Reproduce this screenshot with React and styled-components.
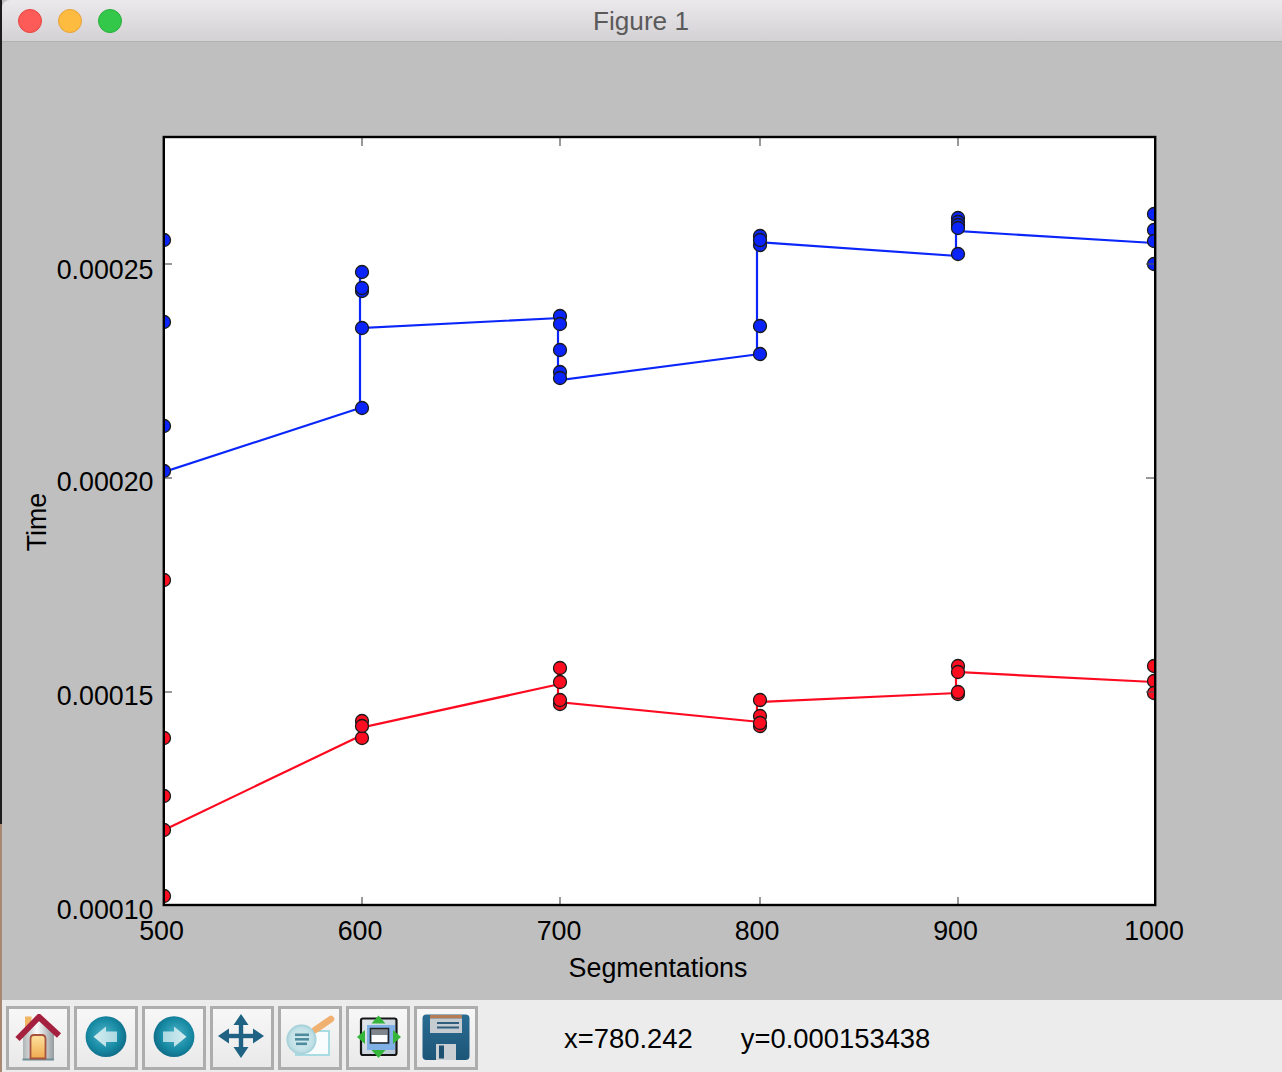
import styled, { createGlobalStyle } from "styled-components";

const GlobalStyle = createGlobalStyle`
  html, body {
    margin: 0;
    padding: 0;
    background: #bfbfbf;
  }
  body {
    font-family: "Liberation Sans", Arial, sans-serif;
  }
`;

const Desktop = styled.div`
  width: 1282px;
  height: 1072px;
  display: flex;
  overflow: hidden;
`;

const DesktopEdge = styled.div`
  width: 2px;
  flex: none;
  background: linear-gradient(#1c1c1c 0, #1c1c1c 824px, #a98770 824px, #a98770 100%);
`;

const Window = styled.div`
  flex: 1;
  min-width: 0;
  display: flex;
  flex-direction: column;
`;

const TitleBar = styled.div`
  height: 41px;
  flex: none;
  display: flex;
  align-items: center;
  position: relative;
  padding-left: 16px;
  gap: 16px;
  background: linear-gradient(#ece9ec, #d3d1d3);
  border-bottom: 1px solid #b1b1b1;
  border-top-left-radius: 8px;
`;

const Light = styled.span`
  width: 24px;
  height: 24px;
  flex: none;
  box-sizing: border-box;
  border-radius: 50%;
  background: ${(p) => p.$color};
  border: 1px solid ${(p) => p.$edge};
`;

const Title = styled.div`
  position: absolute;
  left: 0;
  right: 2px;
  top: 4px;
  text-align: center;
  font-size: 26.2px;
  line-height: 34px;
  color: #5b5a5b;
`;

const Canvas = styled.div`
  flex: 1;
  min-height: 0;
  background: #bfbfbf;
`;

const ChartSvg = styled.svg`
  display: block;
  width: 1280px;
  height: 958px;
`;

const ChartLabel = styled.text`
  font-family: "Liberation Sans", Arial, sans-serif;
  font-size: 26.8px;
  fill: #000;
`;

const Toolbar = styled.div`
  height: 72px;
  flex: none;
  box-sizing: border-box;
  display: flex;
  align-items: center;
  gap: 4px;
  padding: 4px 0 0 4px;
  background: #ececec;
`;

const ToolButton = styled.button`
  width: 64px;
  height: 64px;
  flex: none;
  box-sizing: border-box;
  padding: 0;
  display: flex;
  align-items: center;
  justify-content: center;
  border: 3px solid #adadad;
  background: linear-gradient(#f7f7f7, #e9e9e9);
`;

const ToolSvg = styled.svg`
  display: block;
  width: 48px;
  height: 48px;
  flex: none;
  overflow: visible;
  filter: blur(0.45px);
`;

const Status = styled.div`
  display: flex;
  gap: 48px;
  margin-left: 82px;
  margin-top: 2px;
  font-size: 27.4px;
  line-height: 34px;
  color: #000;
`;

const blue = {
  line: "#0b26fb",
  fill: "#0a24fb",
  line_points: [[164, 472], [360, 408], [360, 272], [360, 328], [560, 318], [558, 318], [558, 378], [560, 380], [760, 354], [757, 354], [757, 242], [958, 256], [956, 254], [956, 231], [1154, 243]],
  marks: [
    [164, 240], [164, 322], [164, 426], [164, 471],
    [362, 272], [362, 291], [362, 288], [362, 328], [362, 408],
    [560, 316], [560, 324], [560, 350], [560, 372], [560, 378],
    [760, 236], [760, 245], [760, 240], [760, 326], [760, 354],
    [958, 218], [958, 222], [958, 225], [958, 228], [958, 254],
    [1154, 214], [1154, 230], [1154, 241], [1154, 264],
  ],
};

const red = {
  line: "#fe0a20",
  fill: "#fe0c20",
  line_points: [[164, 830], [360, 736], [360, 728], [560, 684], [558, 684], [558, 668], [558, 702], [760, 722], [757, 722], [757, 702], [958, 693], [956, 693], [956, 672], [1154, 682]],
  marks: [
    [164, 580], [164, 738], [164, 796], [164, 830], [164, 896],
    [362, 721], [362, 738], [362, 726],
    [560, 668], [560, 682], [560, 704], [560, 700],
    [760, 700], [760, 716], [760, 726], [760, 723],
    [958, 694], [958, 692], [958, 666], [958, 672],
    [1154, 666], [1154, 681], [1154, 693],
  ],
};

const xTicks = [362, 560, 760, 958];
const yTicks = [264, 478, 692];
const xLabels = [[161.5, "500"], [360, "600"], [559, "700"], [757, "800"], [955.5, "900"], [1154, "1000"]];
const yLabels = [[279, "0.00025"], [491, "0.00020"], [705, "0.00015"], [919, "0.00010"]];

function Series({ data }) {
  return (
    <g clipPath="url(#axes)">
      <polyline
        points={data.line_points.map((p) => p.join(",")).join(" ")}
        fill="none"
        stroke={data.line}
        strokeWidth="2.2"
      />
      {data.marks.map(([cx, cy], i) => (
        <circle key={i} cx={cx} cy={cy} r="6.5" fill={data.fill} stroke="#1a1a1a" strokeWidth="1.3" />
      ))}
    </g>
  );
}

function Chart() {
  return (
    <ChartSvg viewBox="2 42 1280 958">
      <defs>
        <clipPath id="axes">
          <rect x="164" y="137" width="991" height="768" />
        </clipPath>
      </defs>
      <rect x="164" y="137" width="991" height="768" fill="#fff" />
      <Series data={blue} />
      <Series data={red} />
      <g stroke="#555" strokeWidth="1.2">
        {xTicks.map((x) => (
          <g key={x}>
            <line x1={x} x2={x} y1="138" y2="146" />
            <line x1={x} x2={x} y1="897" y2="905" />
          </g>
        ))}
        {yTicks.map((y) => (
          <g key={y}>
            <line x1="164" x2="172" y1={y} y2={y} />
            <line x1="1146" x2="1155" y1={y} y2={y} />
          </g>
        ))}
      </g>
      <rect x="163.8" y="137" width="991.4" height="768" fill="none" stroke="#000" strokeWidth="2.4" />
      {xLabels.map(([x, label]) => (
        <ChartLabel key={label} x={x} y="940" textAnchor="middle">{label}</ChartLabel>
      ))}
      {yLabels.map(([y, label]) => (
        <ChartLabel key={label} x="153.5" y={y} textAnchor="end">{label}</ChartLabel>
      ))}
      <ChartLabel x="658" y="977" textAnchor="middle">Segmentations</ChartLabel>
      <ChartLabel x="0" y="0" textAnchor="middle" transform="translate(46 522) rotate(-90)">Time</ChartLabel>
    </ChartSvg>
  );
}

function HomeIcon() {
  return (
    <ToolSvg viewBox="0 0 48 48">
      <defs>
        <linearGradient id="wall" x1="0" x2="1" y1="0" y2="0">
          <stop offset="0" stopColor="#aeb4b6" />
          <stop offset="0.45" stopColor="#fbfbfb" />
          <stop offset="1" stopColor="#959c9f" />
        </linearGradient>
        <linearGradient id="door" x1="0" x2="0" y1="0" y2="1">
          <stop offset="0" stopColor="#fde3a0" />
          <stop offset="1" stopColor="#f0a94e" />
        </linearGradient>
      </defs>
      <rect x="11" y="2.5" width="6.5" height="13" fill="#f0b565" />
      <path d="M9 22 L25 6 L40 20 V46 H9 Z" fill="url(#wall)" />
      <path d="M8.5 45.5 H40" stroke="#6f8f96" strokeWidth="2" />
      <path d="M16.5 44.5 V25 Q16.5 21 20 21 H28 Q31.5 21 31.5 25 V44.5 Z" fill="url(#door)" stroke="#a7533f" strokeWidth="1.8" />
      <path d="M3.5 25 L25 3 L45 21.5" fill="none" stroke="#a5203f" strokeWidth="6" strokeLinejoin="round" />
    </ToolSvg>
  );
}

function ArrowDisc({ flip, id }) {
  return (
    <ToolSvg viewBox="0 0 48 48">
      <defs>
        <radialGradient id={id} cx="0.45" cy="0.45" r="0.58">
          <stop offset="0" stopColor="#4cb3c6" />
          <stop offset="0.65" stopColor="#178aa4" />
          <stop offset="1" stopColor="#0f6a86" />
        </radialGradient>
        <linearGradient id={`${id}Arrow`} x1="0" x2="1" y1="0" y2="0">
          <stop offset="0" stopColor="#d6eef2" />
          <stop offset="1" stopColor="#a9d7e0" />
        </linearGradient>
      </defs>
      <g transform={flip ? "translate(48 0) scale(-1 1)" : undefined}>
        <circle cx="24" cy="22.7" r="20.4" fill={`url(#${id})`} />
        <path d="M11.5 22.7 L24 12.5 V17.5 H35 V28 H24 V33 Z" fill={`url(#${id}Arrow)`} />
      </g>
    </ToolSvg>
  );
}

function MoveIcon() {
  return (
    <ToolSvg viewBox="0 0 48 48">
      <g fill="#1f6283">
        <rect x="5" y="19.8" width="36" height="4.4" />
        <rect x="20.8" y="5" width="4.4" height="34" />
        <path d="M23 0 L30.5 11 H15.5 Z" />
        <path d="M23 44 L30.5 33 H15.5 Z" />
        <path d="M0 22 L11 14.5 V29.5 Z" />
        <path d="M46 22 L35 14.5 V29.5 Z" />
      </g>
    </ToolSvg>
  );
}

function ZoomIcon() {
  return (
    <ToolSvg viewBox="0 0 48 48">
      <defs>
        <radialGradient id="lens" cx="0.5" cy="0.5" r="0.5">
          <stop offset="0" stopColor="#dcf0f3" />
          <stop offset="0.8" stopColor="#bfdfe5" />
          <stop offset="1" stopColor="#9ccdd6" />
        </radialGradient>
      </defs>
      <rect x="10" y="17" width="33" height="24" fill="#f8fcfc" stroke="#a9dbe2" strokeWidth="2" />
      <path d="M29 16 L45 5" stroke="#f0b070" strokeWidth="6.5" strokeLinecap="round" />
      <circle cx="15.5" cy="25.5" r="15" fill="url(#lens)" />
      <g fill="#4f8c9e">
        <rect x="9" y="19.5" width="14" height="2.6" />
        <rect x="9" y="24" width="14" height="2.6" />
        <rect x="10" y="28.5" width="11" height="2.6" />
      </g>
    </ToolSvg>
  );
}

function SubplotsIcon() {
  return (
    <ToolSvg viewBox="0 0 48 48">
      <defs>
        <linearGradient id="sheet" x1="0" x2="1" y1="0" y2="1">
          <stop offset="0" stopColor="#e6e9ec" />
          <stop offset="1" stopColor="#b6c6d4" />
        </linearGradient>
      </defs>
      <rect x="7" y="4.5" width="35.5" height="36.5" rx="2" fill="url(#sheet)" stroke="#161616" strokeWidth="2.2" />
      <rect x="13" y="11" width="28" height="25" fill="#7fb0e6" />
      <rect x="17.5" y="15" width="16" height="6" fill="#80868b" />
      <rect x="17.5" y="21" width="16" height="7.5" fill="#fff" />
      <path d="M16.5 14.5 V29 H34.5 V14.5 Z" fill="none" stroke="#222" strokeWidth="1.6" />
      <g fill="#35b53a">
        <path d="M24.5 1.5 L31.5 9.5 H17.5 Z" />
        <path d="M24.5 44 L31.5 36 H17.5 Z" />
        <path d="M3 23 L11 16 V30 Z" />
        <path d="M47 23 L39 16 V30 Z" />
      </g>
    </ToolSvg>
  );
}

function SaveIcon() {
  return (
    <ToolSvg viewBox="0 0 48 48">
      <defs>
        <linearGradient id="disk" x1="0" x2="0" y1="0" y2="1">
          <stop offset="0" stopColor="#2a6d92" />
          <stop offset="1" stopColor="#1c5578" />
        </linearGradient>
      </defs>
      <rect x="0.5" y="0.5" width="47" height="45.5" rx="4" fill="url(#disk)" />
      <rect x="8" y="1" width="32" height="3.5" fill="#b77c55" />
      <rect x="8" y="4.5" width="32" height="14.5" fill="#c4ccd1" />
      <rect x="15" y="8" width="22" height="2" fill="#2f5f7c" />
      <rect x="15" y="12.5" width="22" height="2" fill="#2f5f7c" />
      <rect x="14" y="30" width="20" height="16" fill="#c9cfd3" />
      <rect x="17" y="31.5" width="5" height="13" fill="#1d4f70" />
    </ToolSvg>
  );
}

export default function App() {
  return (
    <Desktop>
      <GlobalStyle />
      <DesktopEdge />
      <Window>
        <TitleBar>
          <Light $color="#fc5b57" $edge="#e5443f" />
          <Light $color="#fdbb3f" $edge="#e5a23a" />
          <Light $color="#33c84a" $edge="#2aad3c" />
          <Title>Figure 1</Title>
        </TitleBar>
        <Canvas>
          <Chart />
        </Canvas>
        <Toolbar>
          <ToolButton><HomeIcon /></ToolButton>
          <ToolButton><ArrowDisc id="discBack" /></ToolButton>
          <ToolButton><ArrowDisc id="discForward" flip /></ToolButton>
          <ToolButton><MoveIcon /></ToolButton>
          <ToolButton><ZoomIcon /></ToolButton>
          <ToolButton><SubplotsIcon /></ToolButton>
          <ToolButton><SaveIcon /></ToolButton>
          <Status>
            <span>x=780.242</span>
            <span>y=0.000153438</span>
          </Status>
        </Toolbar>
      </Window>
    </Desktop>
  );
}
